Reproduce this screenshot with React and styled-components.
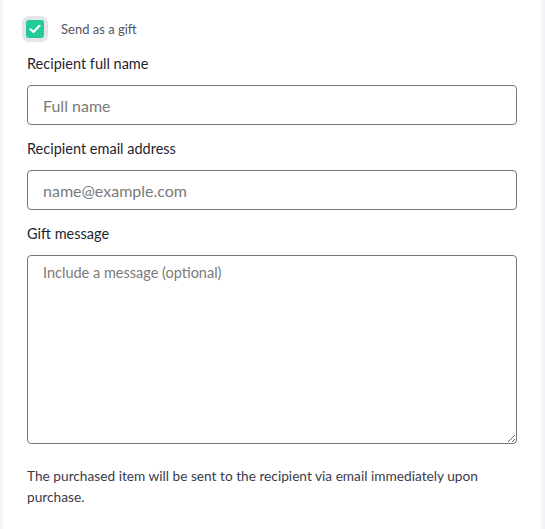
import React from 'react'
import styled, { createGlobalStyle } from 'styled-components'

const GlobalStyle = createGlobalStyle`
  html, body {
    margin: 0;
    padding: 0;
    background: #f3f3f7;
  }
  body {
    font-family: 'Lato', 'Liberation Sans', sans-serif;
  }
`

const Panel = styled.form`
  margin: 0 4px 0 3px;
  min-height: 529px;
  box-sizing: border-box;
  background: #fff;
  padding: 16px 24px 0 24px;
`

const CheckRow = styled.label`
  display: flex;
  align-items: center;
  gap: 13px;
  font-size: 13px;
  color: #55555f;
  margin-bottom: 12px;
`

const CheckBox = styled.span`
  display: flex;
  align-items: center;
  justify-content: center;
  width: 18px;
  height: 18px;
  border-radius: 3px;
  background: #22cc9a;
  box-shadow: 0 0 0 4px #e5e5e9;
  margin: 4px 4px 4px -1px;
`

const Field = styled.div`
  display: flex;
  flex-direction: column;
  margin-bottom: ${(p) => (p.last ? '6px' : '14px')};
`

const Label = styled.span`
  font-size: 14.5px;
  color: #1f1f30;
  line-height: 20px;
  margin-bottom: 11px;
`

const Input = styled.input`
  box-sizing: border-box;
  height: 40px;
  border: 1px solid #777;
  border-radius: 4px;
  padding: 0 15px;
  font-family: inherit;
  font-size: 16px;
  &::placeholder {
    color: #7a7a7a;
  }
`

const TextArea = styled.textarea`
  box-sizing: border-box;
  height: 189px;
  border: 1px solid #777;
  border-radius: 4px;
  padding: 8px 15px;
  font-family: inherit;
  font-size: 14.5px;
  &::placeholder {
    color: #7a7a7a;
  }
`

const Note = styled.p`
  margin: 0;
  padding-top: 15px;
  font-size: 13.7px;
  line-height: 21px;
  color: #3b3b4a;
`

export default function App() {
  return (
    <>
      <GlobalStyle />
      <Panel>
        <CheckRow>
          <CheckBox>
            <svg width="12" height="10" viewBox="0 0 12 10">
              <path d="M1.5 5.2 L4.5 8 L10.5 1.8" fill="none" stroke="#fff" strokeWidth="2.2" strokeLinecap="round" strokeLinejoin="round" />
            </svg>
          </CheckBox>
          Send as a gift
        </CheckRow>
        <Field>
          <Label>Recipient full name</Label>
          <Input placeholder="Full name" />
        </Field>
        <Field>
          <Label>Recipient email address</Label>
          <Input placeholder="name@example.com" />
        </Field>
        <Field last>
          <Label>Gift message</Label>
          <TextArea placeholder="Include a message (optional)" />
        </Field>
        <Note>
          The purchased item will be sent to the recipient via email immediately upon purchase.
        </Note>
      </Panel>
    </>
  )
}
